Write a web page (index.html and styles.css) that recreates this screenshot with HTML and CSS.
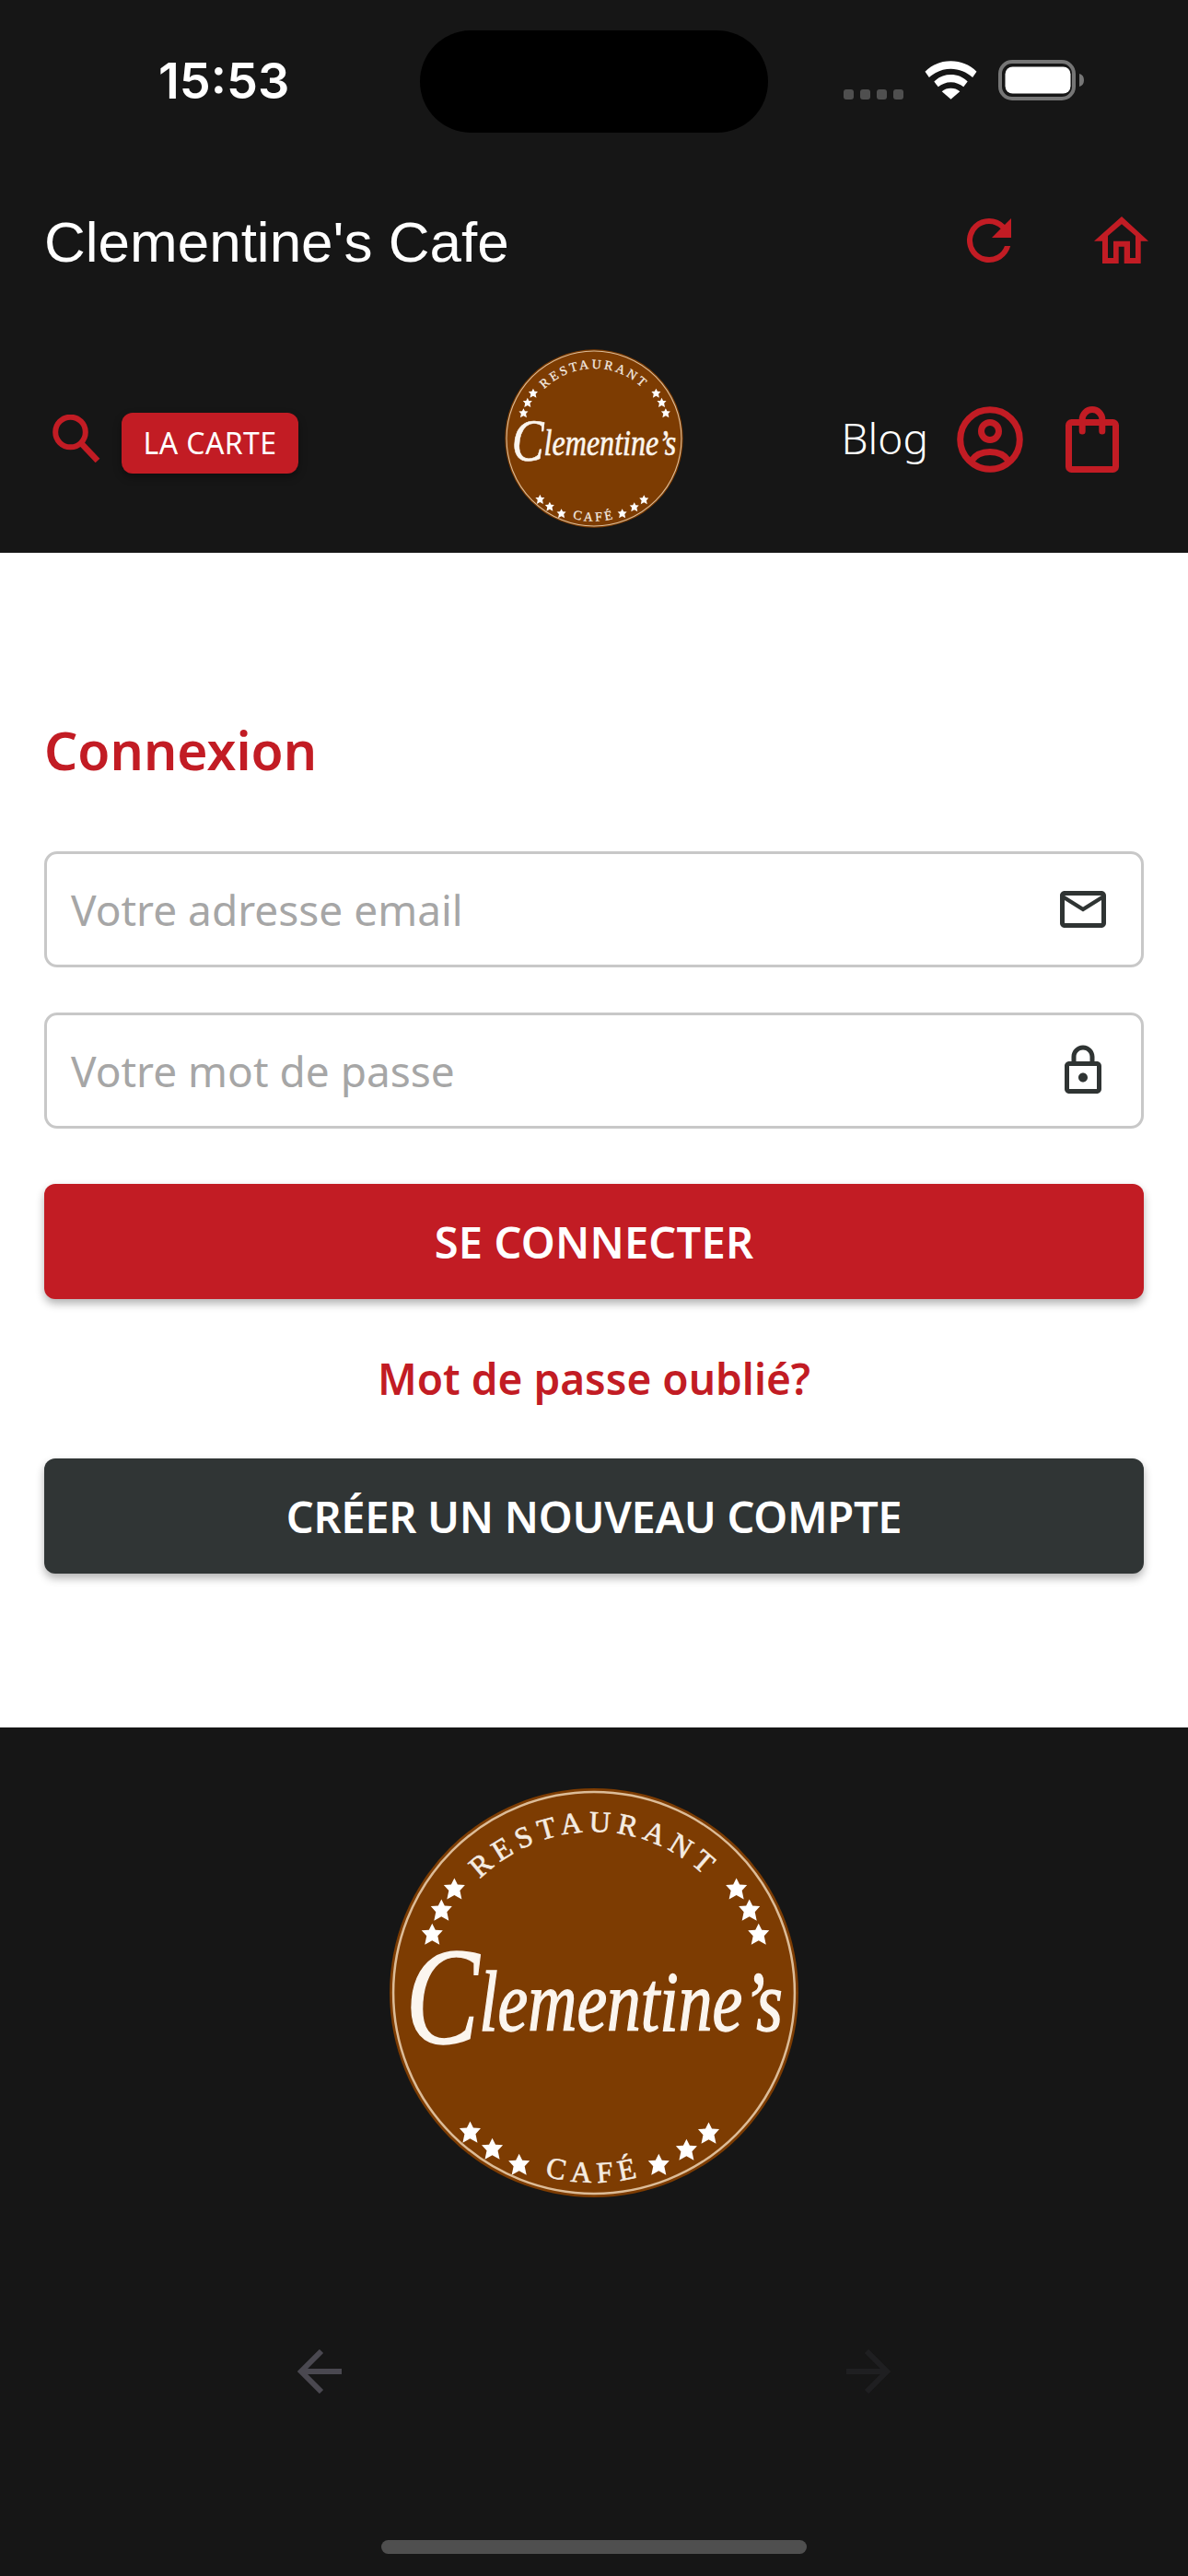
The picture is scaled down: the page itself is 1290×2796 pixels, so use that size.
FILE: index.html
```html
<!DOCTYPE html>
<html lang="fr">
<head>
<meta charset="utf-8">
<title>Clementine's Cafe</title>
<link rel="stylesheet" href="styles.css">
</head>
<body>
<div class="screen">
  <header class="topbar">
    <div class="status">
      <span class="time">15:53</span>
      <span class="island"></span>
      <span class="status-icons">
        <span class="dots"><i></i><i></i><i></i><i></i></span>
        <svg class="wifi" width="58" height="42" viewBox="0 0 58 42"><path fill="#fff" d="M29 0c11 0 21 4 28.500 11.500L53 18C46.500 12 38 8.500 29 8.500S11.500 12 5 18L.5 11.500C8 4 18 0 29 0z"/><path fill="#fff" d="M29 15c7 0 13.500 2.500 18.500 7.500L43 28.500c-3.800-3.300-8.800-5.300-14-5.300s-10.200 2-14 5.300l-4.500-6C15.500 17.500 22 15 29 15z"/><path fill="#fff" d="M29 30c3.700 0 7.200 1.200 10 3.500L29 42 19 33.500c2.800-2.300 6.300-3.500 10-3.500z"/></svg>
        <svg class="battery" width="94" height="44" viewBox="0 0 94 44"><rect x="2" y="2" width="80" height="40" rx="13" fill="none" stroke="#767676" stroke-width="4"/><rect x="7.500" y="7.500" width="71" height="29" rx="8" fill="#fff"/><path d="M88 15c3.500 1 5 3.500 5 7s-1.500 6-5 7z" fill="#767676"/></svg>
      </span>
    </div>
    <div class="appbar">
      <span class="apptitle">Clementine's Cafe</span>
      <span class="appactions">
        <svg width="72" height="72" viewBox="0 0 24 24"><path fill="#c21c24" d="M17.650 6.350A7.960 7.960 0 0 0 12 4a8 8 0 1 0 7.730 10h-2.080A6 6 0 1 1 12 6c1.660 0 3.140.69 4.220 1.780L13 11h7V4l-2.350 2.350z"/></svg>
        <svg width="59" height="51" viewBox="0 0 59 51"><path fill="#c21c24" fill-rule="evenodd" d="M0 26.700 30 0l29 26.700h-8.300V51h-18V32.700h-6V51H9V26.700zM15 21 30 8.300 45 21v24h-6V26.700H21V45h-6z"/></svg>
      </span>
    </div>
    <nav class="navrow">
      <div class="nav-left">
        <svg class="search" width="52" height="52" viewBox="0 0 52 52"><circle cx="19.500" cy="19" r="16.300" fill="none" stroke="#c21c24" stroke-width="6"/><path d="M31 31 49 50" stroke="#c21c24" stroke-width="6.500" fill="none"/></svg>
        <span class="chip">LA CARTE</span>
      </div>
      <svg class="logo logo-small" viewBox="0 0 480 480" role="img" aria-label="Clementine's restaurant café">
        <use href="#badge"/>
      </svg>
      <div class="nav-right">
        <span class="blog">Blog</span>
        <svg width="72" height="72" viewBox="0 0 72 72"><circle cx="36" cy="36" r="32.300" fill="none" stroke="#c21c24" stroke-width="7"/><circle cx="36" cy="27" r="9.500" fill="none" stroke="#c21c24" stroke-width="7"/><path d="M16 59c4-6 11-9.500 20-9.500S52 53 56 59" fill="none" stroke="#c21c24" stroke-width="7"/></svg>
        <svg class="bag" width="58" height="72" viewBox="0 0 58 72"><rect x="3.500" y="17.500" width="51" height="51" rx="3" fill="none" stroke="#c21c24" stroke-width="7"/><path d="M18.200 27V14.300a10.800 10.800 0 0 1 21.600 0V27" fill="none" stroke="#c21c24" stroke-width="7" stroke-linecap="round"/></svg>
      </div>
    </nav>
  </header>

  <main class="content">
    <h1 class="heading">Connexion</h1>
    <div class="field">
      <span class="placeholder">Votre adresse email</span>
      <svg width="60" height="60" viewBox="0 0 24 24"><path fill="#2f3433" d="M22 6c0-1.100-.9-2-2-2H4c-1.100 0-2 .9-2 2v12c0 1.100.9 2 2 2h16c1.100 0 2-.9 2-2V6zm-2 0-8 5-8-5h16zm0 12H4V8l8 5 8-5v10z"/></svg>
    </div>
    <div class="field">
      <span class="placeholder">Votre mot de passe</span>
      <svg width="60" height="60" viewBox="0 0 24 24"><path fill="#2f3433" d="M18 8h-1V6c0-2.760-2.240-5-5-5S7 3.240 7 6v2H6c-1.100 0-2 .9-2 2v10c0 1.100.9 2 2 2h12c1.100 0 2-.9 2-2V10c0-1.100-.9-2-2-2zM9 6c0-1.660 1.340-3 3-3s3 1.340 3 3v2H9V6zm9 14H6V10h12v10zm-6-3c1.100 0 2-.9 2-2s-.9-2-2-2-2 .9-2 2 .9 2 2 2z"/></svg>
    </div>
    <button class="btn btn-red">SE CONNECTER</button>
    <a class="forgot">Mot de passe oublié?</a>
    <button class="btn btn-dark">CRÉER UN NOUVEAU COMPTE</button>
  </main>

  <footer class="footer">
    <svg class="logo logo-large" viewBox="0 0 480 480" role="img" aria-label="Clementine's restaurant café">
      <defs>
        <path id="star" d="M0-12 3.500-5 11.500-4.500 6 1.500 8 11 0 6.500-8 11-6 1.500-11.500-4.500-3.500-5z"/>
        <g id="badge">
          <circle cx="240" cy="240" r="221" fill="#7d3c02"/>
          <circle cx="240" cy="240" r="217" fill="none" stroke="#dcbc98" stroke-width="2.500"/>
          <path id="arcTop" d="M66 240a174 174 0 0 1 348 0" fill="none"/>
          <path id="arcBottom" d="M35 240a205 205 0 0 0 410 0" fill="none"/>
          <text class="arc"><textPath href="#arcTop" startOffset="50%" text-anchor="middle">RESTAURANT</textPath></text>
          <text class="arc"><textPath href="#arcBottom" startOffset="50%" text-anchor="middle">CAFÉ</textPath></text>
          <text class="script" x="240" y="281" text-anchor="middle" textLength="408" lengthAdjust="spacingAndGlyphs"><tspan class="script-cap" dy="14">C</tspan><tspan dy="-14">lementine’s</tspan></text>
          <g fill="#fff">
            <use href="#star" x="89" y="128"/>
            <use href="#star" x="75" y="151"/>
            <use href="#star" x="65" y="177"/>
            <use href="#star" x="394" y="128"/>
            <use href="#star" x="408" y="151"/>
            <use href="#star" x="418" y="177"/>
            <use href="#star" x="106" y="391"/>
            <use href="#star" x="130" y="409"/>
            <use href="#star" x="159" y="426"/>
            <use href="#star" x="310" y="426"/>
            <use href="#star" x="340" y="410"/>
            <use href="#star" x="364" y="392"/>
          </g>
        </g>
      </defs>
      <use href="#badge"/>
    </svg>
    <div class="history">
      <svg width="48" height="48" viewBox="0 0 48 48"><path d="M48 24H5M26 2 4 24l22 22" fill="none" stroke="#4a4850" stroke-width="6"/></svg>
      <svg width="48" height="48" viewBox="0 0 48 48"><path d="M0 24h43M22 2l22 22-22 22" fill="none" stroke="#1f1f21" stroke-width="6"/></svg>
    </div>
    <div class="homebar"></div>
  </footer>
</div>
</body>
</html>
```
FILE: styles.css
```css
* { box-sizing: border-box; }
html, body { margin: 0; padding: 0; }
body { width: 1290px; height: 2796px; background: #161616; font-family: "Noto Sans", "Liberation Sans", sans-serif; overflow: hidden; }
.screen { width: 1290px; height: 2796px; display: flex; flex-direction: column; }

.topbar { height: 600px; background: #161616; color: #fff; display: flex; flex-direction: column; }
.status { height: 174px; position: relative; display: flex; }
.time { position: absolute; left: 172px; top: 56px; font: 600 54px/64px "Inter", sans-serif; }
.island { position: absolute; left: 456px; top: 33px; width: 378px; height: 111px; border-radius: 56px; background: #000; }
.status-icons { position: absolute; left: 916px; top: 65px; width: 262px; height: 44px; display: flex; align-items: flex-end; }
.dots { display: flex; gap: 7px; margin-right: 23px; margin-bottom: 1px; }
.dots i { width: 11px; height: 11px; border-radius: 3px; background: #4f4f4f; }
.wifi { margin-right: 23px; margin-bottom: 1px; }
.battery { flex: none; }

.appbar { height: 174px; padding: 0 43px 0 48px; display: flex; align-items: center; justify-content: space-between; }
.apptitle { font: 400 62px/70px "Liberation Sans", sans-serif; margin-top: 4px; }
.appactions { display: flex; align-items: center; gap: 78px; }
.appactions svg:last-child { margin-top: -2px; }

.navrow { flex: 1; padding: 6px 75px 0 57px; display: flex; align-items: center; }
.nav-left { display: flex; align-items: center; gap: 23px; margin-right: 216px; }
.search { margin-top: -2px; }
.chip { background: #c21c24; color: #fff; width: 192px; height: 66px; margin-top: 8px; border-radius: 12px; display: flex; align-items: center; justify-content: center; font: 400 32px/38px "Noto Sans", sans-serif; letter-spacing: .4px; box-shadow: 0 4px 8px rgba(0,0,0,.35); }
.logo-small { width: 210px; height: 210px; flex: none; margin-top: -2px; }
.nav-right { display: flex; align-items: center; margin-left: auto; }
.blog { font: 300 46px/54px "Noto Sans", sans-serif; margin: -4px 31px 0 0; }
.bag { margin-left: 46px; }

.arc { font: 400 32px "Liberation Serif", serif; fill: #f5ece2; stroke: #f5ece2; stroke-width: .6; letter-spacing: 6.500px; }
.script { font: italic 400 92px "Liberation Serif", serif; fill: #fbf5ee; stroke: #fbf5ee; stroke-width: 1.400; }
.script-cap { font-size: 150px; }

.content { height: 1275px; background: #fff; padding: 0 48px; display: flex; flex-direction: column; }
.heading { margin: 180px 0 0; font: 600 57px/68px "Noto Sans", sans-serif; color: #c21c24; }
.field { height: 126px; border: 3px solid #c8c8c8; border-radius: 14px; padding: 0 33px 0 26px; display: flex; align-items: center; justify-content: space-between; }
.heading + .field { margin-top: 76px; }
.field + .field { margin-top: 49px; }
.placeholder { font: 400 46px/56px "Noto Sans", sans-serif; color: #a6a6a6; }
.btn { display: block; width: 100%; height: 125px; border: 0; border-radius: 12px; color: #fff; font: 600 47px/54px "Noto Sans", sans-serif; letter-spacing: .2px; box-shadow: 0 5px 10px rgba(0,0,0,.3); padding: 0; }
.btn-red { background: #c21c24; margin-top: 60px; }
.btn-dark { background: #303535; letter-spacing: -.3px; }
.forgot { display: block; text-align: center; color: #c21c24; font: 600 46px/52px "Noto Sans", sans-serif; margin: 60px 0 61px; }

.footer { flex: 1; background: #161616; display: flex; flex-direction: column; align-items: center; }
.logo-large { width: 482px; height: 482px; margin-top: 47px; flex: none; }
.history { width: 644px; margin-top: 146px; display: flex; justify-content: space-between; }
.homebar { width: 462px; height: 15px; border-radius: 8px; background: #4f4f4f; margin-top: 159px; }
```
